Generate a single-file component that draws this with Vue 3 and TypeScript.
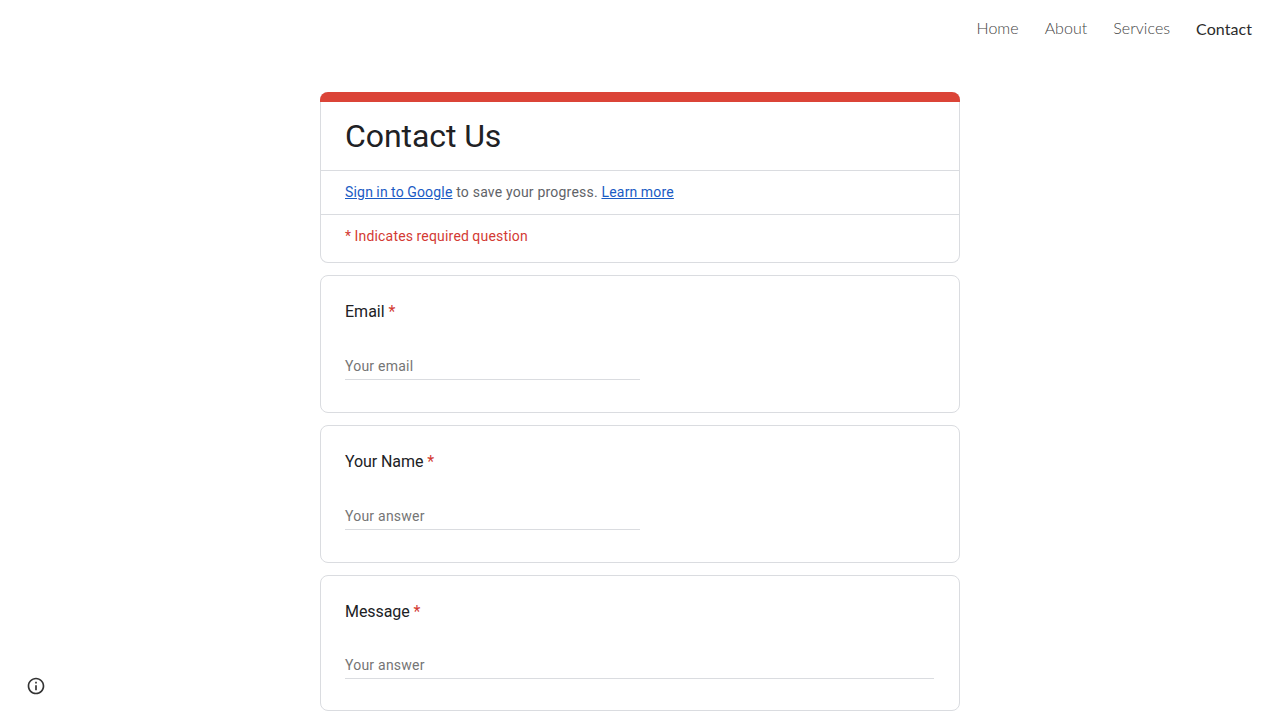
<script setup lang="ts">
interface NavItem {
  label: string
  active?: boolean
}

interface Question {
  title: string
  hint: string
  long?: boolean
}

const nav: NavItem[] = [
  { label: 'Home' },
  { label: 'About' },
  { label: 'Services' },
  { label: 'Contact', active: true },
]

const questions: Question[] = [
  { title: 'Email', hint: 'Your email' },
  { title: 'Your Name', hint: 'Your answer' },
  { title: 'Message', hint: 'Your answer', long: true },
]
</script>

<template>
  <div class="page">
    <nav class="nav">
      <a v-for="item in nav" :key="item.label" class="nav-link" :class="{ active: item.active }">{{ item.label }}</a>
    </nav>

    <main class="form">
      <section class="card intro">
        <div class="accent"></div>
        <h1 class="title">Contact Us</h1>
        <p class="signin"><a class="link">Sign in to Google</a> to save your progress. <a class="link">Learn more</a></p>
        <p class="required">* Indicates required question</p>
      </section>

      <section v-for="q in questions" :key="q.title" class="card question" :class="{ long: q.long }">
        <div class="label">{{ q.title }} <span class="star">*</span></div>
        <div class="field">{{ q.hint }}</div>
      </section>
    </main>

    <button class="info" aria-label="Site information">
      <svg width="20" height="20" viewBox="0 0 24 24" fill="#333">
        <path d="M11 17h2v-6h-2v6zm1-15C6.48 2 2 6.48 2 12s4.48 10 10 10 10-4.48 10-10S17.52 2 12 2zm0 18c-4.41 0-8-3.59-8-8s3.59-8 8-8 8 3.59 8 8-3.59 8-8 8zM11 9h2V7h-2v2z" />
      </svg>
    </button>
  </div>
</template>

<style>
body {
  margin: 0;
  background: #fff;
}
</style>

<style scoped>
.page {
  height: 720px;
  overflow: hidden;
  background: #fff;
  font-family: Roboto, "Liberation Sans", sans-serif;
}

.nav {
  box-sizing: border-box;
  height: 92px;
  padding: 18px 28px 0 0;
  display: flex;
  justify-content: flex-end;
  gap: 26px;
  font-family: Lato, sans-serif;
  font-size: 16px;
  line-height: 20px;
}

.nav-link {
  font-weight: 300;
  letter-spacing: 0.03px;
  color: #444;
}

.nav-link.active {
  padding-top: 1px;
  font-weight: 400;
  letter-spacing: 0.06px;
  color: #2b2b2b;
}

.form {
  width: 640px;
  margin: 0 auto;
  display: flex;
  flex-direction: column;
  gap: 12px;
}

.card {
  box-sizing: border-box;
  border: 1px solid #dadce0;
  border-radius: 8px;
}

.intro {
  height: 171px;
  border-top: 0;
}

.accent {
  height: 10px;
  margin: 0 -1px;
  border-radius: 8px 8px 0 0;
  background: #db4437;
}

.title {
  box-sizing: border-box;
  height: 68px;
  margin: 0;
  padding: 14px 24px 0;
  font-size: 32px;
  font-weight: 400;
  line-height: 40px;
  letter-spacing: -0.08px;
  color: #202124;
}

.signin,
.required {
  box-sizing: border-box;
  height: 44px;
  margin: 0;
  padding: 11px 24px 0;
  border-top: 1px solid #dadce0;
  font-size: 14px;
  line-height: 20px;
  letter-spacing: 0.2px;
  color: #5f6368;
}

.required {
  word-spacing: -0.45px;
  color: #d33a33;
}

.link {
  word-spacing: -0.45px;
  color: #1a5bc4;
  text-decoration: underline;
}

.question {
  height: 138px;
  padding: 24px 24px 0;
}

.question.long {
  height: 136px;
}

.label {
  height: 24px;
  font-size: 16px;
  line-height: 24px;
  color: #202124;
}

.question:not(:nth-child(2)) .label {
  letter-spacing: -0.08px;
}

.star {
  color: #d33a33;
}

.field {
  box-sizing: border-box;
  width: 295px;
  height: 25px;
  margin-top: 31px;
  border-bottom: 1px solid #dadce0;
  font-size: 14px;
  line-height: 22px;
  letter-spacing: 0.23px;
  color: #757575;
}

.long .field {
  width: 589px;
  margin-top: 30px;
}

.info {
  position: fixed;
  left: 26px;
  bottom: 24px;
  width: 20px;
  height: 20px;
  padding: 0;
  border: 0;
  background: none;
}

.info svg {
  display: block;
}
</style>
